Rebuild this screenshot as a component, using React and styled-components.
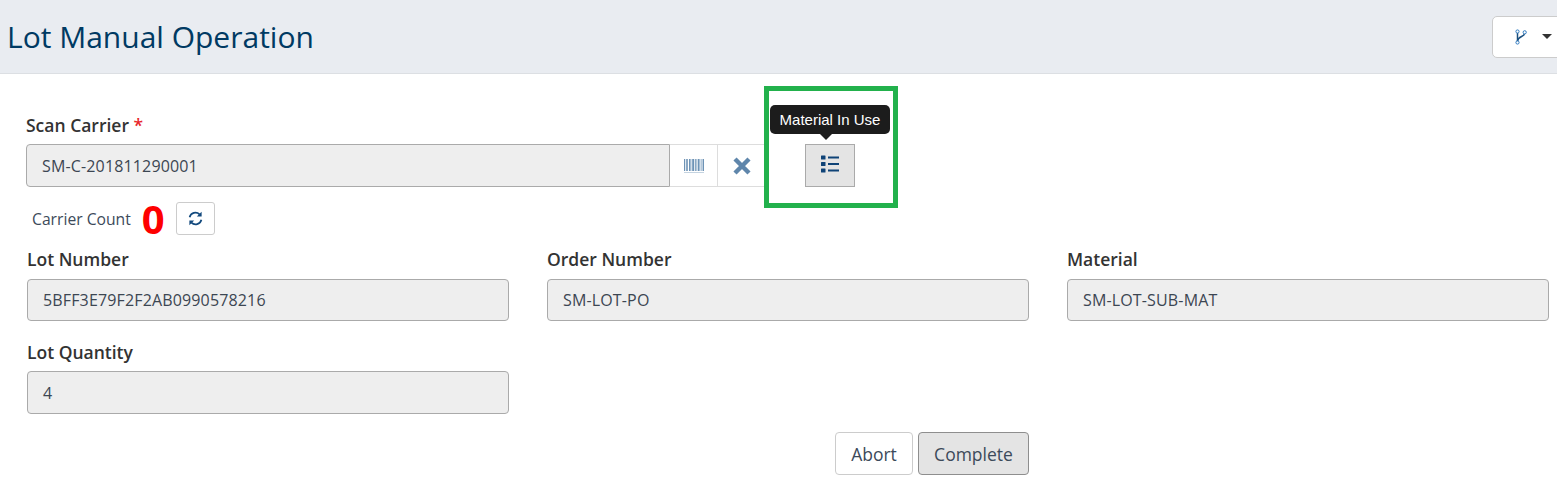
import React from "react";
import styled, { createGlobalStyle } from "styled-components";

const Global = createGlobalStyle`
  html, body { margin: 0; padding: 0; background: #fff; overflow: hidden; }
  body { font-family: "Open Sans", sans-serif; color: #333; }
`;
const Page = styled.div`position: relative; width: 1557px; height: 487px; overflow: hidden;`;
const Header = styled.header`
  height: 73px; box-sizing: content-box; background: #e9ecf1; border-bottom: 1px solid #dcdfe3;
  display: flex; align-items: center; justify-content: space-between; padding-left: 7px;
`;
const Title = styled.h1`margin: 0; font-size: 30px; font-weight: 400; color: #003a63; line-height: 73px;`;
const HeaderMenu = styled.button`
  width: 70px; height: 42px; margin-right: -5px; box-sizing: border-box;
  background: #fff; border: 1px solid #ccc; border-radius: 5px; padding: 0 0 0 22px;
  display: flex; align-items: center; gap: 14px;
`;
const Caret = styled.span`
  width: 0; height: 0; border-left: 5px solid transparent; border-right: 5px solid transparent; border-top: 5px solid #333;
`;
const Form = styled.main`padding: 40px 8px 0 26px; display: flex; flex-direction: column;`;
const Label = styled.label`
  display: block; font-size: 17.5px; font-weight: 600; line-height: 22px; color: #333;
`;
const Req = styled.span`color: #e8272c;`;
const ScanRow = styled.div`display: flex; align-items: flex-start; margin-top: 8px;`;
const ReadOnly = styled.div`
  box-sizing: border-box; height: ${p => p.$h || 42}px; background: #eee; border: 1px solid #aaa;
  border-radius: 4px; padding: 0 15px; display: flex; align-items: center;
  font-size: 16px; color: #3c4652; letter-spacing: 0.15px;
`;
const ScanInput = styled(ReadOnly)`width: 644px; border-radius: 4px 0 0 4px;`;
const Addon = styled.div`
  box-sizing: border-box; width: ${p => p.$w}px; height: 43px; background: #fff;
  border: 1px solid #ddd; border-left: none; display: flex; align-items: center; justify-content: center;
`;
const ListButton = styled.button`
  box-sizing: border-box; width: 50px; height: 43px; margin-left: 38px; padding: 0 0 3px;
  background: #e4e4e4; border: 1px solid #aaa; display: flex; align-items: center; justify-content: center;
`;
const CountRow = styled.div`display: flex; align-items: center; height: 33px; margin-top: 15px; padding-left: 6px;`;
const CountLabel = styled.span`font-size: 15.7px; color: #3c4a5a;`;
const CountValue = styled.span`
  font-size: 40px; font-weight: 700; color: #fe0000; line-height: 33px; margin-left: 11px; width: 34px;
`;
const RefreshButton = styled.button`
  box-sizing: border-box; width: 39px; height: 33px; padding: 0; background: #fff;
  border: 1px solid #ccc; border-radius: 3px; display: flex; align-items: center; justify-content: center;
`;
const FieldRow = styled.div`
  display: grid; grid-template-columns: repeat(3, 482px); column-gap: 38px;
  margin: ${p => p.$gap}px 0 0 1px;
`;
const FieldLabel = styled(Label)`margin-bottom: ${p => p.$gap}px;`;
const Actions = styled.div`display: flex; gap: 5px; margin: 18px 0 0 809px;`;
const ActionButton = styled.button`
  box-sizing: border-box; height: 43px; width: ${p => p.$w}px; padding: 0;
  font-family: "Open Sans", sans-serif; font-size: 17.5px; color: #3c4a5a;
  background: ${p => (p.$active ? "#e4e4e4" : "#fff")};
  border: 1px solid ${p => (p.$active ? "#8e8e8e" : "#ccc")}; border-radius: 4px;
`;
const Highlight = styled.div`
  position: absolute; left: 764px; top: 86px; width: 134px; height: 122px; box-sizing: border-box;
  border: 5px solid #22b14c; pointer-events: none;
`;
const Tooltip = styled.div`
  position: absolute; left: 770px; top: 105px; width: 120px; height: 29px; background: #1c1c1c;
  border-radius: 5px; color: #fff; font-family: "Liberation Sans", Arial, sans-serif; font-size: 15px;
  display: flex; align-items: center; justify-content: center;
  &::after {
    content: ""; position: absolute; left: 50px; top: 29px; border-left: 6px solid transparent;
    border-right: 6px solid transparent; border-top: 6px solid #1c1c1c;
  }
`;

const BranchIcon = () => (
  <svg width="13" height="16" viewBox="0 0 13 16" fill="none">
    <path d="M2.5 3.5V13" stroke="#1a4f7e" strokeWidth="1.5" />
    <path d="M9.5 4.5C9.5 8 3 7 2.5 12" stroke="#1a4f7e" strokeWidth="1.5" />
    <circle cx="2.5" cy="2.5" r="1.6" fill="#fff" stroke="#2e7ac0" strokeWidth="1" />
    <circle cx="9.7" cy="3.3" r="1.6" fill="#fff" stroke="#2e7ac0" strokeWidth="1" />
    <circle cx="2.5" cy="13.5" r="1.6" fill="#fff" stroke="#2e7ac0" strokeWidth="1" />
  </svg>
);
const BarcodeIcon = () => (
  <svg width="20" height="14" viewBox="0 0 20 14">
    {[0, 2, 3.2, 5, 6.5, 8, 9, 11, 12.5, 14, 15.5, 17.5, 18.8].map((x, i) => (
      <rect key={i} x={x} y="0" width={i % 3 === 0 ? 1.2 : 0.8} height="12" fill="#6d93b6" />
    ))}
    <rect x="0" y="13" width="20" height="1" fill="#c4d3e0" />
  </svg>
);
const XIcon = () => (
  <svg width="20" height="20" viewBox="0 0 20 20">
    <path d="M3 3L17 17M17 3L3 17" stroke="#5f86ab" strokeWidth="4.4" />
  </svg>
);
const ListIcon = () => (
  <svg width="18" height="18" viewBox="0 0 18 18" fill="#0f4377">
    <rect x="0" y="0.5" width="4.5" height="4" rx="0.5" />
    <rect x="0" y="7" width="4.5" height="4" rx="0.5" />
    <rect x="0" y="13.5" width="4.5" height="4" rx="0.5" />
    <rect x="7" y="1.5" width="11" height="2" />
    <rect x="7" y="8" width="11" height="2" />
    <rect x="7" y="14.5" width="11" height="2" />
  </svg>
);
const RefreshIcon = () => (
  <svg width="15" height="15" viewBox="0 0 15 15" fill="none">
    <path d="M1.6 6.2A6 6 0 0 1 11.6 3.4" stroke="#12497d" strokeWidth="1.7" />
    <path d="M13.4 8.8A6 6 0 0 1 3.4 11.6" stroke="#12497d" strokeWidth="1.7" />
    <path d="M13.6 0.8V5.6H8.8Z" fill="#12497d" />
    <path d="M1.4 14.2V9.4H6.2Z" fill="#12497d" />
  </svg>
);

const Field = ({ label, value, h, labelGap = 9 }) => (
  <div>
    <FieldLabel $gap={labelGap}>{label}</FieldLabel>
    <ReadOnly $h={h}>{value}</ReadOnly>
  </div>
);

export default function App() {
  return (
    <Page>
      <Global />
      <Header>
        <Title>Lot Manual Operation</Title>
        <HeaderMenu><BranchIcon /><Caret /></HeaderMenu>
      </Header>
      <Form>
        <Label>Scan Carrier <Req>*</Req></Label>
        <ScanRow>
          <ScanInput $h={43}>SM-C-201811290001</ScanInput>
          <Addon $w={48}><BarcodeIcon /></Addon>
          <Addon $w={49}><XIcon /></Addon>
          <ListButton><ListIcon /></ListButton>
        </ScanRow>
        <CountRow>
          <CountLabel>Carrier Count</CountLabel>
          <CountValue>0</CountValue>
          <RefreshButton><RefreshIcon /></RefreshButton>
        </CountRow>
        <FieldRow $gap={13}>
          <Field label="Lot Number" value="5BFF3E79F2F2AB0990578216" />
          <Field label="Order Number" value="SM-LOT-PO" />
          <Field label="Material" value="SM-LOT-SUB-MAT" />
        </FieldRow>
        <FieldRow $gap={20}>
          <Field label="Lot Quantity" value="4" h={43} labelGap={8} />
        </FieldRow>
        <Actions>
          <ActionButton $w={78}>Abort</ActionButton>
          <ActionButton $w={111} $active>Complete</ActionButton>
        </Actions>
      </Form>
      <Highlight />
      <Tooltip>Material In Use</Tooltip>
    </Page>
  );
}
